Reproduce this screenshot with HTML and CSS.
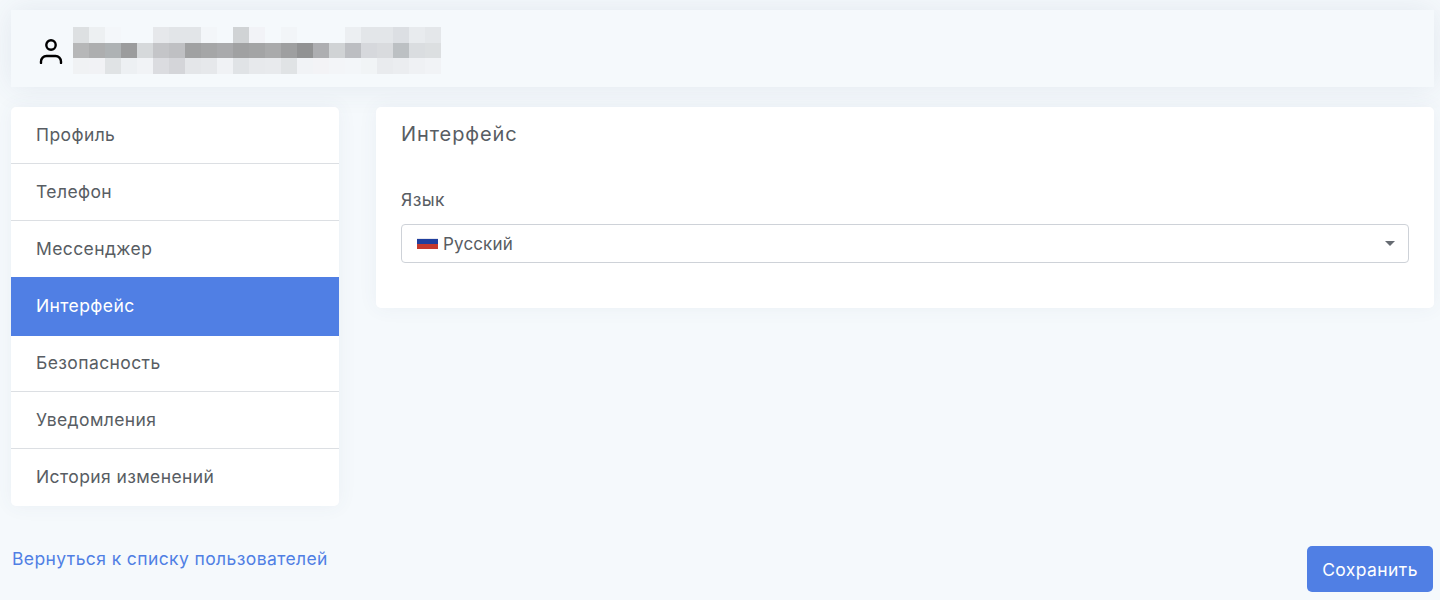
FILE: index.html
```html
<!doctype html>
<html lang="ru">
<head>
	<meta charset="UTF-8">
	<title>Интерфейс</title>
	<link rel="stylesheet" href="styles.css">
</head>
<body>
<!--шапка пользователя-->
<header class="user_header">
	<svg class="user_icon" width="24" height="26" viewBox="0 0 24 26" fill="none" stroke="#000" stroke-width="2.4" stroke-linecap="round">
		<circle cx="12" cy="7" r="4.7"/>
		<path d="M2 25v-1.5a5.5 5.5 0 0 1 5.5-5.5h9a5.5 5.5 0 0 1 5.5 5.5V25"/>
	</svg>
	<!--скрытое имя-->
	<svg class="user_blur" width="368" height="47" viewBox="0 0 23 3" preserveAspectRatio="none" shape-rendering="crispEdges">
		<g id="row1">
			<rect x="0" y="0" width="1" height="1" fill="#dde0e2"/><rect x="1" y="0" width="1" height="1" fill="#edf0f2"/><rect x="2" y="0" width="1" height="1" fill="#f4f7fa"/><rect x="5" y="0" width="1" height="1" fill="#e6e8eb"/><rect x="6" y="0" width="1" height="1" fill="#e2e5e8"/><rect x="7" y="0" width="1" height="1" fill="#e2e5e8"/><rect x="8" y="0" width="1" height="1" fill="#f3f6f9"/><rect x="10" y="0" width="1" height="1" fill="#d0d3d5"/><rect x="11" y="0" width="1" height="1" fill="#f2f3f7"/><rect x="13" y="0" width="1" height="1" fill="#f2f5f8"/><rect x="17" y="0" width="1" height="1" fill="#eceff2"/><rect x="18" y="0" width="1" height="1" fill="#e3e6e9"/><rect x="19" y="0" width="1" height="1" fill="#e3e6e9"/><rect x="20" y="0" width="1" height="1" fill="#dcdfe3"/><rect x="21" y="0" width="1" height="1" fill="#e8ebee"/><rect x="22" y="0" width="1" height="1" fill="#e4e7ea"/>
		</g>
		<g id="row2">
			<rect x="0" y="1" width="1" height="1" fill="#b6b7b8"/><rect x="1" y="1" width="1" height="1" fill="#adaeaf"/><rect x="2" y="1" width="1" height="1" fill="#aeb2b4"/><rect x="3" y="1" width="1" height="1" fill="#9b9c9d"/><rect x="4" y="1" width="1" height="1" fill="#d6d9db"/><rect x="5" y="1" width="1" height="1" fill="#c4c5c8"/><rect x="6" y="1" width="1" height="1" fill="#bfc0c3"/><rect x="7" y="1" width="1" height="1" fill="#a0a1a2"/><rect x="8" y="1" width="1" height="1" fill="#a5a6a7"/><rect x="9" y="1" width="1" height="1" fill="#a9aaac"/><rect x="10" y="1" width="1" height="1" fill="#a0a1a2"/><rect x="11" y="1" width="1" height="1" fill="#a3a4a5"/><rect x="12" y="1" width="1" height="1" fill="#a9aaab"/><rect x="13" y="1" width="1" height="1" fill="#9e9fa0"/><rect x="14" y="1" width="1" height="1" fill="#919293"/><rect x="15" y="1" width="1" height="1" fill="#adaeb1"/><rect x="16" y="1" width="1" height="1" fill="#d0d3d5"/><rect x="17" y="1" width="1" height="1" fill="#bcbec2"/><rect x="18" y="1" width="1" height="1" fill="#d6d8dc"/><rect x="19" y="1" width="1" height="1" fill="#d9dbde"/><rect x="20" y="1" width="1" height="1" fill="#bcc0c3"/><rect x="21" y="1" width="1" height="1" fill="#dadde0"/><rect x="22" y="1" width="1" height="1" fill="#dcdfe1"/>
		</g>
		<g id="row3">
			<rect x="0" y="2" width="1" height="1" fill="#f0f2f4"/><rect x="1" y="2" width="1" height="1" fill="#f1f2f5"/><rect x="2" y="2" width="1" height="1" fill="#e0e3e5"/><rect x="3" y="2" width="1" height="1" fill="#edf0f3"/><rect x="4" y="2" width="1" height="1" fill="#f1f3f6"/><rect x="5" y="2" width="1" height="1" fill="#dbdce0"/><rect x="6" y="2" width="1" height="1" fill="#d4d5d9"/><rect x="7" y="2" width="1" height="1" fill="#e4e6e9"/><rect x="8" y="2" width="1" height="1" fill="#e6e8eb"/><rect x="9" y="2" width="1" height="1" fill="#f0f2f5"/><rect x="10" y="2" width="1" height="1" fill="#e0e3e6"/><rect x="11" y="2" width="1" height="1" fill="#e7e9ec"/><rect x="12" y="2" width="1" height="1" fill="#e8eaed"/><rect x="13" y="2" width="1" height="1" fill="#e0e3e5"/><rect x="14" y="2" width="1" height="1" fill="#f1f3f6"/><rect x="15" y="2" width="1" height="1" fill="#f3f3f6"/><rect x="16" y="2" width="1" height="1" fill="#f3f5f8"/><rect x="17" y="2" width="1" height="1" fill="#f3f6f9"/><rect x="18" y="2" width="1" height="1" fill="#f1f4f6"/><rect x="19" y="2" width="1" height="1" fill="#e9ebee"/><rect x="20" y="2" width="1" height="1" fill="#ebedf0"/><rect x="21" y="2" width="1" height="1" fill="#eff1f4"/><rect x="22" y="2" width="1" height="1" fill="#f1f3f6"/>
		</g>
	</svg>
</header>
<!--контент страницы-->
<section class="page_row">
	<ul class="side_menu">
		<li class="menu_item">Профиль</li>
		<li class="menu_item">Телефон</li>
		<li class="menu_item">Мессенджер</li>
		<li class="menu_item menu_active">Интерфейс</li>
		<li class="menu_item">Безопасность</li>
		<li class="menu_item">Уведомления</li>
		<li class="menu_item">История изменений</li>
	</ul>
	<div class="main_card">
		<h2 class="card_title">Интерфейс</h2>
		<label class="field_label">Язык</label>
		<div class="select_box">
			<svg class="flag" width="21" height="11" viewBox="0 0 21 11" shape-rendering="crispEdges">
				<rect width="21" height="1" fill="#e8e8ee"/>
				<rect y="1" width="21" height="5" fill="#1f3f9e"/>
				<rect y="6" width="21" height="5" fill="#c4392d"/>
			</svg>
			<span class="select_text">Русский</span>
			<span class="select_arrow"></span>
		</div>
	</div>
</section>
<!--низ страницы-->
<footer class="page_footer">
	<a href="#" class="back_link">Вернуться к списку пользователей</a>
	<button class="save_btn">Сохранить</button>
</footer>
</body>
</html>
```

FILE: styles.css
```css
*{margin:0;padding:0;box-sizing:border-box}
html,body{height:100%}
body{
	padding:10px 6px 0 11px;
	background-color:#f5f9fc;
	font-family:"Inter","Noto Sans",sans-serif;
	font-size:17.5px;
	letter-spacing:.4px;
	color:#585d63;
	overflow:hidden;
}
.user_header{
	display:flex;
	align-items:flex-end;
	height:77px;
	padding:0 0 13px 28px;
	background-color:#f5f9fc;
	box-shadow:0 0 30px rgba(60,80,120,.1);
}
.user_icon{margin-bottom:10px}
.user_blur{margin-left:10px;display:block}
.page_row{
	display:flex;
	align-items:flex-start;
	gap:37px;
	margin-top:20px;
}
.side_menu{
	width:328px;
	flex:none;
	list-style:none;
	background-color:#fff;
	border-radius:5px;
	overflow:hidden;
	box-shadow:0 0 20px rgba(60,80,120,.06);
}
.menu_item{
	height:57px;
	padding-left:25px;
	line-height:56px;
	border-bottom:1px solid #dcdfe3;
}
.menu_item:last-child{border-bottom:0}
.menu_active{
	height:59px;
	margin-top:-1px;
	margin-bottom:-1px;
	line-height:58px;
	background-color:#507fe4;
	color:#fff;
	border-bottom:0;
}
.main_card{
	flex:1;
	height:201px;
	padding:15px 25px 0;
	background-color:#fff;
	border-radius:5px;
	box-shadow:0 0 20px rgba(60,80,120,.06);
}
.card_title{
	font-size:20px;
	font-weight:400;
	letter-spacing:.9px;
	line-height:24px;
}
.field_label{
	display:block;
	margin-top:42px;
	line-height:24px;
}
.select_box{
	display:flex;
	align-items:center;
	height:39px;
	margin-top:12px;
	padding:0 13px 0 15px;
	border:1px solid #ced2d8;
	border-radius:4px;
	font-size:17px;
	letter-spacing:.15px;
}
.select_text{margin-left:5px}
.select_arrow{
	margin-left:auto;
	border-top:5px solid #666b72;
	border-left:5px solid transparent;
	border-right:5px solid transparent;
}
.page_footer{
	display:flex;
	justify-content:space-between;
	align-items:center;
	margin-top:40px;
	padding-left:1px;
	padding-right:1px;
}
.back_link{
	color:#507fe4;
	text-decoration:none;
	margin-top:-22px;
}
.save_btn{
	width:126px;
	height:46px;
	border:0;
	border-radius:5px;
	background-color:#507fe4;
	color:#fff;
	font-family:inherit;
	font-size:17.5px;
	letter-spacing:.4px;
}
```
